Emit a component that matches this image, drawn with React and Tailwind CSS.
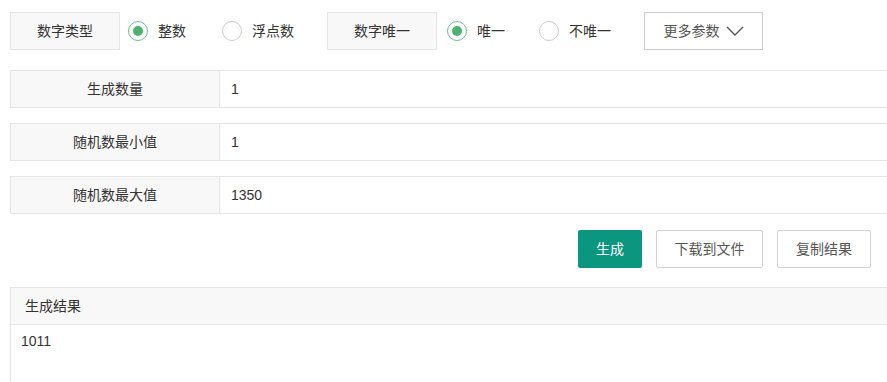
import React from "react";

const font = { fontFamily: '"Liberation Sans", "Noto Sans CJK SC", sans-serif' };

function Radio({ checked, label, gap }) {
  return (
    <div className={"flex items-center " + (gap || "")}>
      <span
        className={
          "w-[20px] h-[20px] rounded-full border flex items-center justify-center bg-white " +
          (checked ? "border-[#6dbf8c]" : "border-[#cccccc]")
        }
      >
        {checked && <span className="w-[10px] h-[10px] rounded-full bg-[#4cb26f]" />}
      </span>
      <span className="ml-[10px] text-[14px] text-[#333]">{label}</span>
    </div>
  );
}

function Row({ label, value }) {
  return (
    <div className="flex h-[38px] w-[900px] border border-[#e6e6e6] border-r-0">
      <div className="w-[209px] shrink-0 bg-[#f8f8f8] border-r border-[#e6e6e6] flex items-center justify-center text-[14px] text-[#333]">
        {label}
      </div>
      <div className="flex-1 flex items-center pl-[11px] text-[14px] text-[#333] bg-white">{value}</div>
    </div>
  );
}

export default function App() {
  return (
    <div className="w-[887px] h-[382px] overflow-hidden bg-white" style={font}>
      <div className="flex items-center pt-[12px] pl-[10px]">
        <div className="w-[110px] h-[38px] border border-[#e6e6e6] bg-[#f8f8f8] flex items-center justify-center text-[14px] text-[#333]">
          数字类型
        </div>
        <div className="ml-[8px]">
          <Radio checked label="整数" />
        </div>
        <div className="ml-[36px]">
          <Radio label="浮点数" />
        </div>
        <div className="ml-[33px] w-[110px] h-[38px] border border-[#e6e6e6] bg-[#f8f8f8] flex items-center justify-center text-[14px] text-[#333]">
          数字唯一
        </div>
        <div className="ml-[10px]">
          <Radio checked label="唯一" />
        </div>
        <div className="ml-[34px]">
          <Radio label="不唯一" />
        </div>
        <div className="ml-[33px] w-[119px] h-[38px] border border-[#cfcfcf] bg-white flex items-center justify-center text-[14px] text-[#555] gap-[6px]">
          <span>更多参数</span>
          <svg width="18" height="10" viewBox="0 0 18 10" fill="none">
            <path d="M1 1 L9 9 L17 1" stroke="#555" strokeWidth="1.4" />
          </svg>
        </div>
      </div>

      <div className="pl-[10px] mt-[20px] flex flex-col gap-[15px]">
        <Row label="生成数量" value="1" />
        <Row label="随机数最小值" value="1" />
        <Row label="随机数最大值" value="1350" />
      </div>

      <div className="flex justify-end gap-[14px] pr-[16px] mt-[16px]">
        <button className="w-[64px] h-[38px] rounded-[2px] bg-[#0b9680] text-white text-[14px]">生成</button>
        <button className="w-[107px] h-[38px] rounded-[2px] border border-[#d2d2d2] bg-white text-[#555] text-[14px]">
          下载到文件
        </button>
        <button className="w-[94px] h-[38px] rounded-[2px] border border-[#d2d2d2] bg-white text-[#555] text-[14px]">
          复制结果
        </button>
      </div>

      <div className="ml-[10px] mt-[19px] w-[900px] border border-[#e6e6e6] border-r-0">
        <div className="h-[37px] bg-[#f8f8f8] border-b border-[#e6e6e6] flex items-center pl-[14px] text-[14px] text-[#333]">
          生成结果
        </div>
        <div className="pl-[10px] pt-[6px] h-[80px] text-[14px] text-[#333]">1011</div>
      </div>
    </div>
  );
}
